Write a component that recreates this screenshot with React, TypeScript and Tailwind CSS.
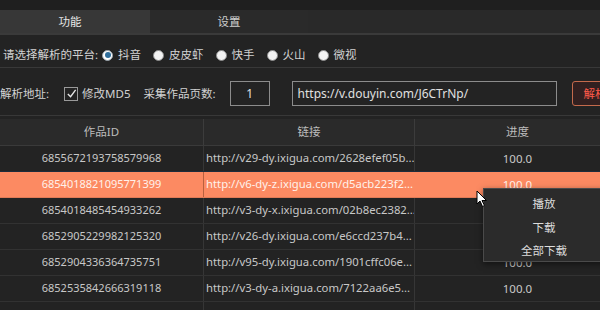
import React from 'react';

const rows = [
  { id: '6855672193758579968', url: 'http://v29-dy.ixigua.com/2628efef05b...', progress: '100.0' },
  { id: '6854018821095771399', url: 'http://v6-dy-z.ixigua.com/d5acb223f2...', progress: '100.0' },
  { id: '6854018485454933262', url: 'http://v3-dy-x.ixigua.com/02b8ec2382...', progress: '100.0' },
  { id: '6852905229982125320', url: 'http://v26-dy.ixigua.com/e6ccd237b4...', progress: '100.0' },
  { id: '6852904336364735751', url: 'http://v95-dy.ixigua.com/1901cffc06e...', progress: '100.0' },
  { id: '6852535842666319118', url: 'http://v3-dy-a.ixigua.com/7122aa6e5...', progress: '100.0' },
  { id: '', url: '', progress: '' },
];

const platforms = ['抖音', '皮皮虾', '快手', '火山', '微视'];

const Radio: React.FC<{ label: string; checked?: boolean }> = ({ label, checked }) => (
  <label className="flex items-center gap-[5px] whitespace-nowrap">
    {checked ? (
      <span className="w-[11px] h-[11px] rounded-full bg-white border border-[#9aa4ad] flex items-center justify-center">
        <span className="w-[6px] h-[6px] rounded-full bg-[#2f6e9c]" />
      </span>
    ) : (
      <span className="w-[11px] h-[11px] rounded-full bg-[#f2f2f2] border border-[#8c8c8c]" />
    )}
    <span>{label}</span>
  </label>
);

const App: React.FC = () => {
  return (
    <div
      className="relative w-[600px] h-[310px] overflow-hidden bg-[#232323] text-[#d2d2d2] text-[11.5px]"
      style={{ fontFamily: '"Noto Sans", "Noto Sans CJK SC", sans-serif' }}
    >
      <div className="h-[10px] bg-[#1f1f1f]" />

      {/* tabs */}
      <div className="flex h-[25px] bg-[#2a2a2a] border-b-2 border-[#3a3a3a]">
        <div className="w-[150px] bg-[#373737] flex items-center justify-center text-[#e6e6e6] pr-[10px]">功能</div>
        <div className="w-[158px] flex items-center justify-center text-[#cfcfcf]">设置</div>
        <div className="flex-1 bg-[#292929]" />
      </div>

      {/* platform row */}
      <div className="h-[33px] flex items-center pl-[3px] pt-[10px] pb-[2px] border-b border-[#383838] whitespace-nowrap">
        <span className="mr-[4px]">请选择解析的平台:</span>
        <div className="flex items-center gap-[12px]">
          {platforms.map((p, i) => (
            <Radio key={p} label={p} checked={i === 0} />
          ))}
        </div>
      </div>

      {/* address row */}
      <div className="h-[48px] flex items-center border-b border-[#383838] pt-[4px] whitespace-nowrap overflow-hidden">
        <span className="shrink-0 mr-[15px]">解析地址:</span>
        <span className="shrink-0 w-[14px] h-[14px] border border-[#9a9a9a] flex items-center justify-center">
          <svg width="11" height="11" viewBox="0 0 12 12">
            <path d="M2 6.5 L5 9.5 L10.5 2" fill="none" stroke="#e8e8e8" strokeWidth="1.5" />
          </svg>
        </span>
        <span className="shrink-0 ml-[4px]">修改MD5</span>
        <span className="shrink-0 ml-[13px]">采集作品页数:</span>
        <div className="shrink-0 ml-[14px] w-[40px] h-[25px] border border-[#8c8c8c] flex items-center justify-center text-[12px] text-[#e0e0e0]">
          1
        </div>
        <div className="shrink-0 ml-[22px] w-[265px] h-[25px] border border-[#8c8c8c] flex items-center pl-[5px] text-[12px] text-[#e0e0e0]">
          https://v.douyin.com/J6CTrNp/
        </div>
        <div className="shrink-0 ml-[15px] w-[40px] h-[25px] border border-[#c46a4c] rounded-[3px] bg-[#322020] flex items-center pl-[11px] text-[#ff5a4a]">
          解析
        </div>
      </div>

      {/* table */}
      <div className="mt-[3px] w-[620px]">
        <div className="flex h-[27px] bg-[#2a2a2a] border-b border-[#3a3a3a] text-[#bcbcbc]">
          <div className="w-[204px] flex items-center justify-center border-r border-[#3c3c3c]">作品ID</div>
          <div className="w-[211px] flex items-center justify-center border-r border-[#3c3c3c]">链接</div>
          <div className="w-[205px] flex items-center justify-center">进度</div>
        </div>
        {rows.map((r, i) => {
          const selected = i === 1;
          return (
            <div
              key={i}
              className={
                selected
                  ? 'flex h-[26px] bg-[#fc8a62] text-[#fff1ea] border-b border-[#e07a56]'
                  : i === 0
                  ? 'flex h-[26px] text-[#c8c8c8] border-b border-[#1e2c3b]'
                  : 'flex h-[26px] text-[#c8c8c8] border-b border-[#323232]'
              }
            >
              <div
                className={
                  selected
                    ? 'w-[204px] flex items-center justify-center text-[11px] border-r border-[#b8603f]'
                    : 'w-[204px] flex items-center justify-center text-[11px] border-r border-[#363636]'
                }
              >
                {r.id}
              </div>
              <div
                className={
                  selected
                    ? 'w-[211px] flex items-center pl-[2px] text-[11.3px] overflow-hidden whitespace-nowrap border-r border-[#fc8a62]'
                    : 'w-[211px] flex items-center pl-[2px] text-[11.3px] overflow-hidden whitespace-nowrap border-r border-[#363636]'
                }
              >
                {r.url}
              </div>
              <div className="w-[205px] flex items-center justify-center">{r.progress}</div>
            </div>
          );
        })}
      </div>

      {/* context menu */}
      <div className="absolute left-[483px] top-[188px] w-[122px] h-[74px] bg-[#2b2b2b] border border-[#4a4a4a] py-[3px] text-[#dcdcdc] shadow-[0_2px_6px_rgba(0,0,0,0.5)]">
        <div className="h-[24px] flex items-center justify-center">播放</div>
        <div className="h-[24px] flex items-center justify-center">下载</div>
        <div className="h-[21px] flex items-center justify-center">全部下载</div>
      </div>

      {/* mouse cursor */}
      <svg className="absolute left-[476px] top-[190px]" width="12" height="18" viewBox="0 0 12 18">
        <path d="M1 1 L1 14 L4 11 L6.5 16.5 L8.5 15.5 L6 10.5 L10.5 10.5 Z" fill="#ffffff" stroke="#000000" strokeWidth="1" strokeLinejoin="round" />
      </svg>
    </div>
  );
};

export default App;
